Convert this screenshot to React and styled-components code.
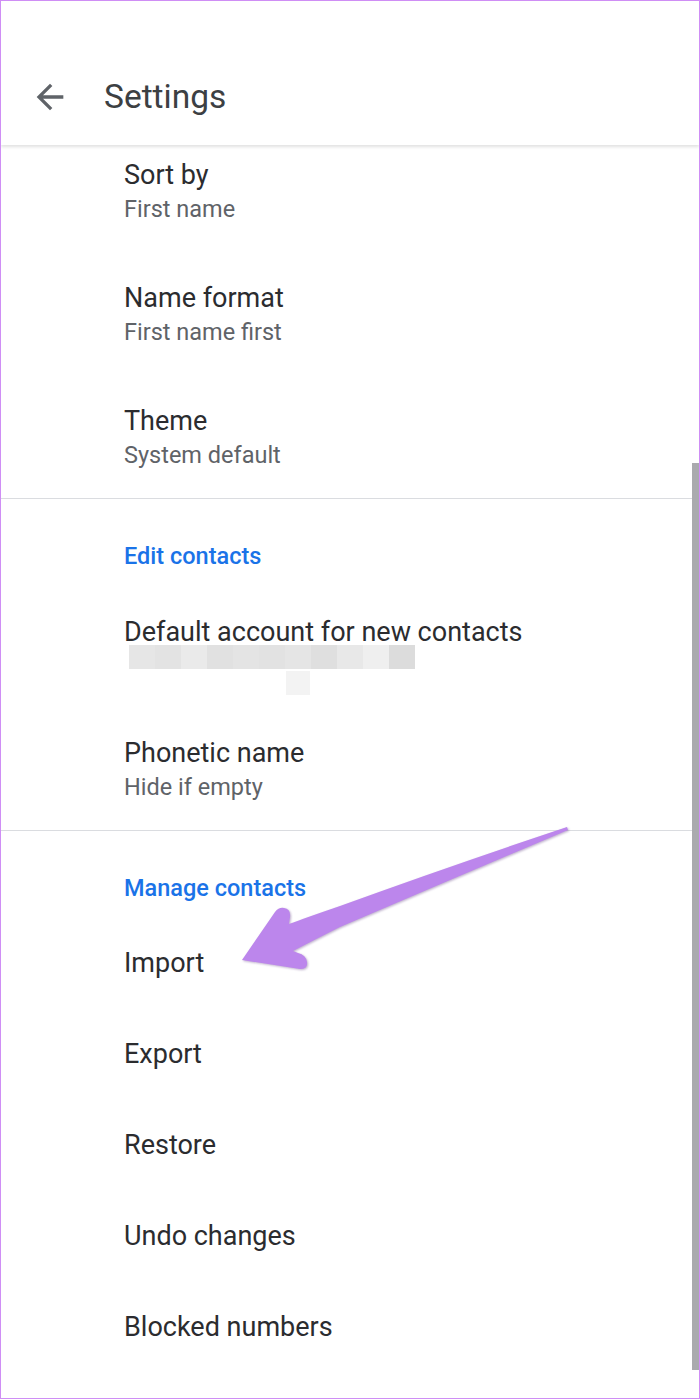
import React from 'react';
import styled, { createGlobalStyle } from 'styled-components';

const GlobalStyle = createGlobalStyle`
  html, body {
    margin: 0;
    padding: 0;
    background: #ffffff;
  }
  body {
    font-family: Roboto, "Noto Sans", "Liberation Sans", sans-serif;
    -webkit-font-smoothing: antialiased;
  }
`;

const Frame = styled.div`
  position: relative;
  box-sizing: border-box;
  width: 700px;
  height: 1399px;
  border: 1px solid #cf8ef5;
  background: #ffffff;
  overflow: hidden;
`;

const AppBar = styled.header`
  position: relative;
  z-index: 1;
  box-sizing: border-box;
  height: 144px;
  padding: 48px 0 0 29px;
  display: flex;
  align-items: center;
  gap: 34px;
  background: #ffffff;
  box-shadow: 0 2px 3px rgba(0, 0, 0, 0.12);
`;

const BackButton = styled.button`
  width: 40px;
  height: 40px;
  padding: 0;
  border: 0;
  background: none;
  display: flex;
  align-items: center;
  justify-content: center;
  color: #5f6368;
  cursor: pointer;
`;

const Title = styled.h1`
  margin: 0;
  font-size: 33.5px;
  line-height: 40px;
  font-weight: 400;
  color: #3c4043;
`;

const List = styled.div`
  margin-top: -16px;
  display: flex;
  flex-direction: column;
`;

const Row = styled.div`
  box-sizing: border-box;
  height: ${p => p.$height || 123}px;
  padding: ${p => (p.$single ? '29px' : '30px')} 0 0 123px;
  display: flex;
  flex-direction: column;
`;

const RowTitle = styled.div`
  font-size: 27px;
  line-height: 32px;
  color: #2b2c2f;
`;

const RowSub = styled.div`
  margin-top: 2px;
  font-size: 23.5px;
  line-height: 32px;
  color: #5f6368;
`;

const Divider = styled.hr`
  margin: 0;
  border: 0;
  height: 1px;
  background: #dadce0;
`;

const SectionHeader = styled.div`
  box-sizing: border-box;
  height: 87px;
  padding: 41px 0 0 123px;
  font-size: 23.5px;
  line-height: 32px;
  font-weight: 500;
  color: #1a73e8;
`;

const Mosaic = styled.div`
  display: flex;
  margin: -3px 0 0 5px;
`;

const Cell = styled.span`
  width: ${p => p.$w || 26}px;
  height: 24px;
  background: ${p => p.$c};
`;

const MosaicTail = styled.div`
  margin: 2px 0 0 162px;
  width: 24px;
  height: 24px;
  background: #f3f3f3;
`;

const ScrollThumb = styled.div`
  position: absolute;
  top: 462px;
  right: 0;
  width: 7px;
  height: 907px;
  background: #aaaaae;
`;

const Pointer = styled.svg`
  position: absolute;
  left: 0;
  top: 0;
  width: 698px;
  height: 1397px;
  pointer-events: none;
  z-index: 2;
  filter: drop-shadow(1px 1px 1px rgba(70, 30, 110, 0.35));
`;

const blurCells = [
  '#e6e6e6', '#e3e3e3', '#eaeaea', '#e1e1e1', '#e4e4e4', '#e2e2e2',
  '#e5e5e5', '#dfdfdf', '#e8e8e8', '#efefef', '#dcdcdc',
];

const ArrowBack = () => (
  <svg width="40" height="40" viewBox="0 0 24 24" fill="currentColor">
    <path d="M20 11H7.83l5.59-5.59L12 4l-8 8 8 8 1.41-1.41L7.83 13H20v-2z" />
  </svg>
);

const TwoLine = ({ title, sub }) => (
  <Row>
    <RowTitle>{title}</RowTitle>
    <RowSub>{sub}</RowSub>
  </Row>
);

const manageItems = ['Import', 'Export', 'Restore', 'Undo changes', 'Blocked numbers'];

export default function App() {
  return (
    <>
      <GlobalStyle />
      <Frame>
        <AppBar>
          <BackButton aria-label="Back">
            <ArrowBack />
          </BackButton>
          <Title>Settings</Title>
        </AppBar>

        <List>
          <TwoLine title="Sort by" sub="First name" />
          <TwoLine title="Name format" sub="First name first" />
          <TwoLine title="Theme" sub="System default" />
          <Divider />

          <SectionHeader>Edit contacts</SectionHeader>
          <Row $height={121}>
            <RowTitle>Default account for new contacts</RowTitle>
            <Mosaic>
              {blurCells.map((c, i) => (
                <Cell key={i} $c={c} />
              ))}
            </Mosaic>
            <MosaicTail />
          </Row>
          <TwoLine title="Phonetic name" sub="Hide if empty" />
          <Divider />

          <SectionHeader>Manage contacts</SectionHeader>
          {manageItems.map(item => (
            <Row key={item} $single $height={91}>
              <RowTitle>{item}</RowTitle>
            </Row>
          ))}
        </List>

        <ScrollThumb />

        <Pointer viewBox="1 1 698 1397">
          <path
            fill="#bc86ec"
            d="M567 827 Q450 866 340 906 Q305 918 289 924 L290 917 Q291 909 284 908 Q279 907 275 912 L242 960 L300 969 Q308 969 307 962 Q306 955 298 953 L293 951 Q318 938 340 927 Q455 878 568 830 Z"
          />
        </Pointer>
      </Frame>
    </>
  );
}
